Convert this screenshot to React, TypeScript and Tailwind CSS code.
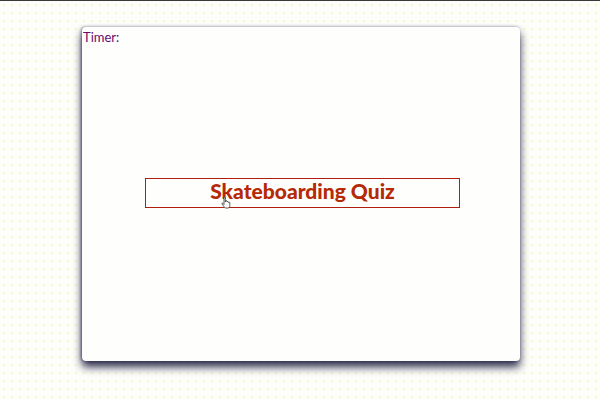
export default function App() {
  return (
    <div className="w-[600px] h-[400px] overflow-hidden border-t border-[#3a3a3a] bg-[#fdfdfa] bg-[radial-gradient(#f5ef80_0.6px,transparent_0.8px)] bg-[length:8px_8px] pt-[26px] pl-[82px]">
      <div className="w-[438px] h-[334px] rounded-[4px] bg-[#fefefd] shadow-[0_6px_9px_rgba(10,10,50,0.85),-1px_0_3px_rgba(20,20,60,0.5)] flex flex-col">
        <div className="h-[18px] pl-[1px] pt-[2px] text-[13px] leading-[16px] text-[#6a0a6a] font-['Lato','Liberation_Sans',sans-serif]">
          Timer:
        </div>
        <div className="flex-1 flex items-center justify-center pb-[20px] pl-[3px]">
          <button className="relative w-[315px] h-[30px] border border-[#b01e10] bg-transparent text-[#b52a05] text-[21px] font-black leading-[24px] pb-[4px] font-['Lato','Liberation_Sans',sans-serif] tracking-[0px]">
            Skateboarding Quiz
            <svg className="absolute left-[75px] top-[17px]" width="12" height="13" viewBox="0 0 12 13">
              <path d="M3 1.5 C3 0.8 4.3 0.8 4.3 1.5 L4.3 6 L4.6 5 C4.8 4.4 6 4.4 6 5.2 L6 6 C6.2 5.3 7.4 5.3 7.4 6.1 L7.4 6.6 C7.6 6 8.8 6 8.8 6.8 L8.8 9.5 C8.8 11 8 12 6.8 12 L5 12 C4 12 3.5 11.3 2.8 10.4 L1 8 C0.6 7.4 1.5 6.7 2 7.3 L3 8.5 Z" fill="#fff" stroke="#333" strokeWidth="0.8" />
            </svg>
          </button>
        </div>
      </div>
    </div>
  );
}
